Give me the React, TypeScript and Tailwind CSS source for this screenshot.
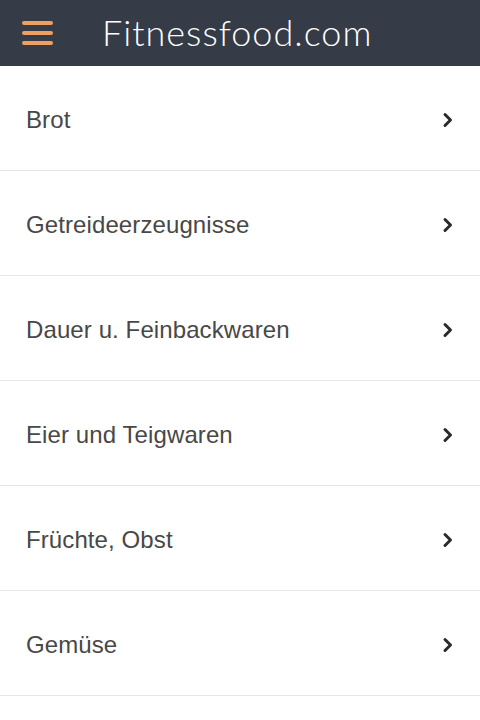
const categories = [
  'Brot',
  'Getreideerzeugnisse',
  'Dauer u. Feinbackwaren',
  'Eier und Teigwaren',
  'Früchte, Obst',
  'Gemüse',
]

function Chevron() {
  return (
    <svg width="12" height="16" viewBox="0 0 12 16" className="shrink-0">
      <path
        d="M3 2.5 L8.5 8 L3 13.5"
        fill="none"
        stroke="#2a2a2a"
        strokeWidth="3"
        strokeLinecap="round"
        strokeLinejoin="round"
      />
    </svg>
  )
}

export default function App() {
  return (
    <div className="w-[480px] h-[720px] bg-white overflow-hidden font-['Liberation_Sans',Arial,sans-serif]">
      {/* Header */}
      <header className="h-[66px] bg-[#353b47] flex items-center">
        <div className="ml-[22px] w-[31px] flex flex-col gap-[6px]">
          <span className="h-[4px] rounded-full bg-[#eea062]" />
          <span className="h-[4px] rounded-full bg-[#eea062]" />
          <span className="h-[4px] rounded-full bg-[#eea062]" />
        </div>
        <h1 className="ml-[49px] text-white text-[36px] font-light tracking-[1px] font-['Lato',sans-serif] leading-none pb-[2px]">
          Fitnessfood.com
        </h1>
      </header>

      {/* Category list */}
      <ul>
        {categories.map((name) => (
          <li
            key={name}
            className="h-[105px] border-b border-[#e6e6e6] flex items-center justify-between pl-[26px] pr-[26px] pt-[3px]"
          >
            <span className="text-[24px] text-[#484848] tracking-[0.1px]">{name}</span>
            <Chevron />
          </li>
        ))}
      </ul>
    </div>
  )
}
